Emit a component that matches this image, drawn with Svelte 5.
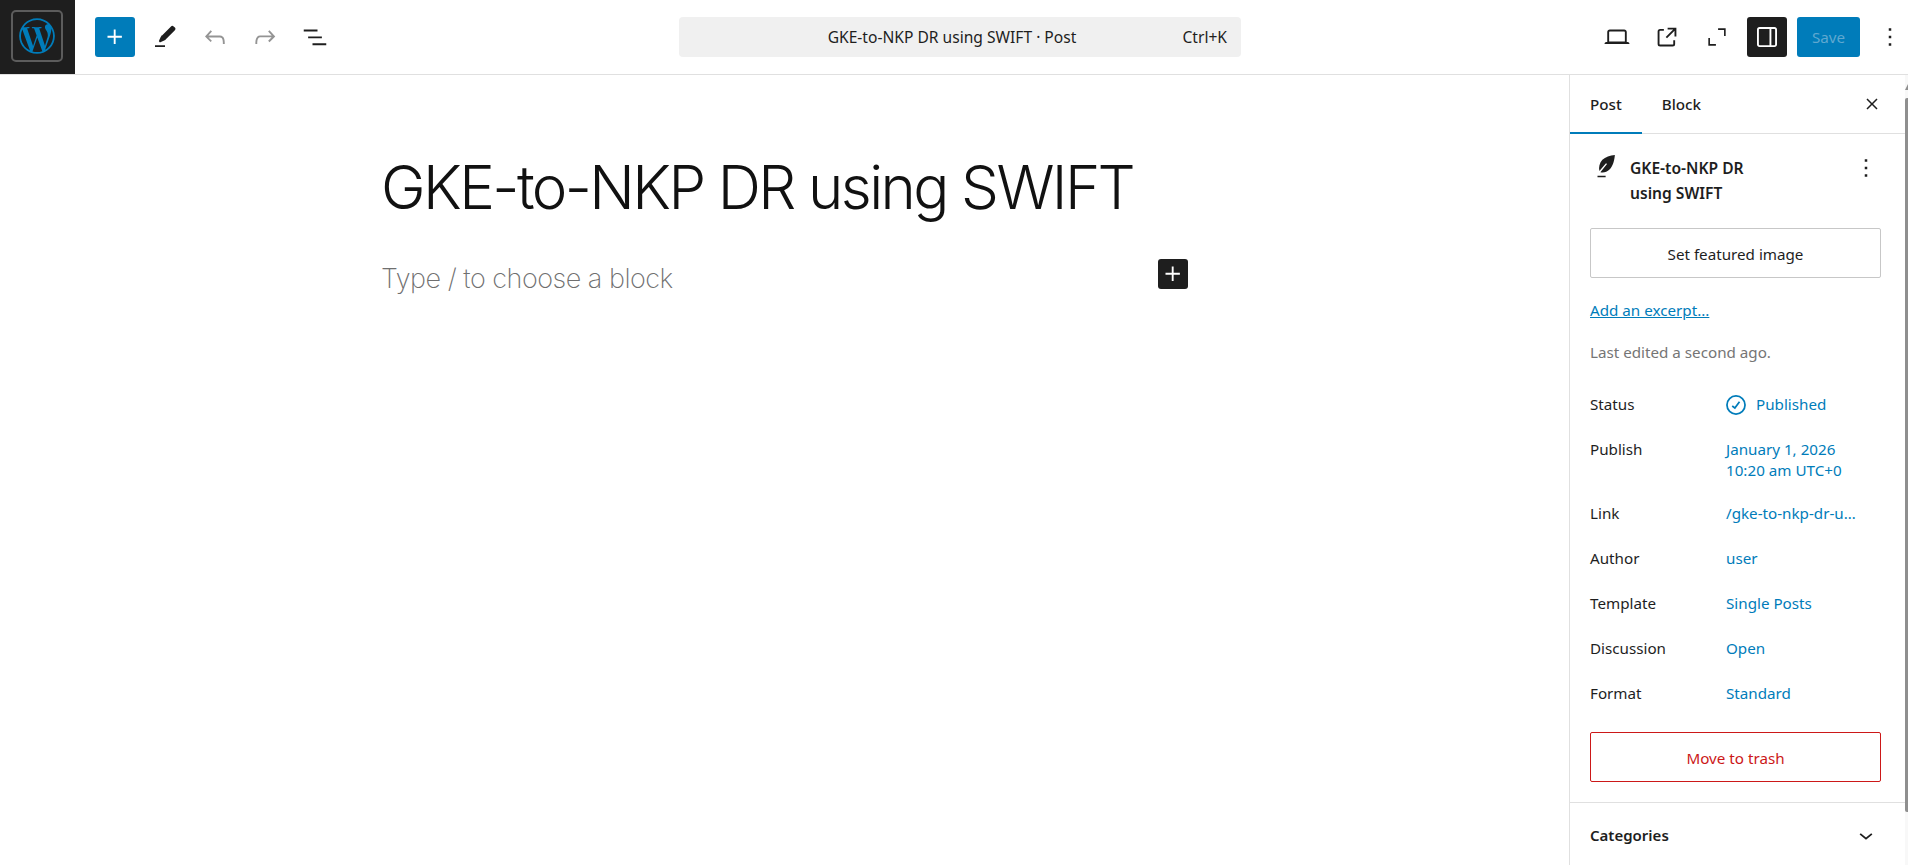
<script>
  const rows = [
    { label: 'Link', value: '/gke-to-nkp-dr-u…' },
    { label: 'Author', value: 'user' },
    { label: 'Template', value: 'Single Posts' },
    { label: 'Discussion', value: 'Open' },
    { label: 'Format', value: 'Standard' }
  ];
</script>

<div class="editor">
  <header class="topbar">
    <div class="left">
      <a class="logo" href="#top" aria-label="View Posts">
        <span class="logo-frame">
          <svg width="38" height="38" viewBox="0 0 80 80">
            <path fill="#007cba" d="M40 2.4C19.3 2.4 2.4 19.3 2.4 40S19.3 77.6 40 77.6 77.6 60.7 77.6 40 60.7 2.4 40 2.4zM6.2 40c0-4.9 1-9.5 2.9-13.8l16.1 44.1C14 64.9 6.2 53.4 6.2 40zM40 73.8c-3.3 0-6.5-.5-9.5-1.4l10.1-29.4 10.4 28.4c.1.2.2.3.2.5-3.5 1.2-7.2 1.9-11.2 1.9zm4.7-49.6c2-.1 3.9-.3 3.9-.3 1.8-.2 1.6-2.9-.2-2.8 0 0-5.5.4-9 .4-3.3 0-8.9-.4-8.9-.4-1.8-.1-2.1 2.7-.2 2.8 0 0 1.7.2 3.6.3l5.3 14.6-7.5 22.4-12.4-37c2-.1 3.9-.3 3.9-.3 1.8-.2 1.6-2.9-.2-2.8 0 0-5.5.4-9 .4h-2.2C17.8 12.2 28.2 6.2 40 6.2c8.8 0 16.8 3.4 22.8 8.9h-.4c-3.3 0-5.7 2.9-5.7 6 0 2.8 1.6 5.1 3.3 7.9 1.3 2.3 2.8 5.1 2.8 9.3 0 2.9-1.1 6.2-2.6 10.9l-3.4 11.3-12.1-36.3zM57 69.2l10.3-29.7c1.9-4.8 2.6-8.6 2.6-12 0-1.2-.1-2.4-.2-3.4 2.6 4.8 4.1 10.2 4.1 15.9 0 12.5-6.8 23.4-16.8 29.2z"/>
          </svg>
        </span>
      </a>
      <div class="tools">
        <button class="icon-btn primary" aria-label="Add block">
          <svg viewBox="0 0 24 24"><path fill="#fff" d="M11 12.5V17.5H12.5V12.5H17.5V11H12.5V6H11V11H6V12.5H11Z"/></svg>
        </button>
        <button class="icon-btn" aria-label="Tools">
          <svg viewBox="0 0 24 24"><path fill="#1e1e1e" d="M4 20h8v-1.5H4V20zM18.9 3.5c-.6-.6-1.500-.6-2.100 0l-7.200 7.200c-.4-.4-2.500 4.700-2.500 4.700l.9.9s5.100-2.100 4.700-2.500l7.200-7.200c.6-.7.6-1.600 0-2.200z"/></svg>
        </button>
        <button class="icon-btn" aria-label="Undo">
          <svg viewBox="0 0 24 24"><path fill="#949494" d="M18.3 11.7c-.6-.6-1.400-.9-2.300-.9H6.700l2.900-3.300-1.100-1-4.500 5L8.500 16l1-1-2.700-2.700H16c.5 0 .9.2 1.300.5 1 1 1 3.400 1 4.500v.3h1.500v-.2c0-1.500 0-4.300-1.500-5.700z"/></svg>
        </button>
        <button class="icon-btn" aria-label="Redo">
          <svg viewBox="0 0 24 24"><path fill="#949494" d="M15.6 6.500l-1.100 1 2.900 3.300H8c-.9 0-1.700.3-2.300.9-1.400 1.500-1.400 4.200-1.400 5.600v.2h1.500v-.3c0-1.100 0-3.500 1-4.500.3-.3.7-.5 1.300-.5h9.200L14.500 15l1.100 1.100 4.600-4.600-4.600-5z"/></svg>
        </button>
        <button class="icon-btn" aria-label="Document overview">
          <svg viewBox="0 0 24 24"><path fill="#1e1e1e" d="M3 6h11v1.500H3V6Zm3.500 5.500h11V13h-11v-1.500ZM21 17H10v1.500h11V17Z"/></svg>
        </button>
      </div>
    </div>

    <div class="command">
      <span class="command-title">GKE-to-NKP DR using SWIFT · Post</span>
      <span class="shortcut">Ctrl+K</span>
    </div>

    <div class="right">
      <button class="icon-btn" aria-label="View">
        <svg viewBox="0 0 24 24"><path fill="#1e1e1e" d="M20.500 16h-.7V8c0-1.100-.9-2-2-2H6.200c-1.100 0-2 .9-2 2v8h-.7c-.8 0-1.500.7-1.500 1.500h20c0-.8-.7-1.500-1.500-1.500zM5.700 8c0-.3.2-.5.5-.5h11.600c.3 0 .5.2.5.5v7.600H5.700V8z"/></svg>
      </button>
      <button class="icon-btn" aria-label="View post">
        <svg viewBox="0 0 24 24"><path fill="#1e1e1e" d="M19.500 4.500h-7V6h4.440l-5.970 5.970 1.060 1.060L18 7.060v4.440h1.500v-7Zm-13 1a2 2 0 0 0-2 2v10a2 2 0 0 0 2 2h10a2 2 0 0 0 2-2v-3H17v3a.5.5 0 0 1-.5.5h-10a.5.5 0 0 1-.5-.5v-10a.5.5 0 0 1 .5-.5h3V5.500h-3Z"/></svg>
      </button>
      <button class="icon-btn full" aria-label="Fullscreen">
        <svg viewBox="0 0 24 24"><path fill="#1e1e1e" d="M13 5.500h5.500V11H20V4h-7v1.500zM5.500 13H4v7h7v-1.500H5.500V13z"/></svg>
      </button>
      <button class="icon-btn dark" aria-label="Settings">
        <svg viewBox="0 0 24 24"><path fill="#fff" d="M18 4H6c-1.100 0-2 .9-2 2v12c0 1.100.9 2 2 2h12c1.100 0 2-.9 2-2V6c0-1.100-.9-2-2-2zM5.500 18V6c0-.3.2-.5.5-.5h8v13H6c-.3 0-.5-.2-.5-.5zm13 0c0 .3-.2.5-.5.5h-2.500v-13H18c.3 0 .5.2.5.5v12z"/></svg>
      </button>
      <button class="save">Save</button>
      <button class="icon-btn more" aria-label="Options">
        <svg viewBox="0 0 24 24"><path fill="#1e1e1e" d="M13 19h-2v-2h2v2zm0-6h-2v-2h2v2zm0-6h-2V5h2v2z"/></svg>
      </button>
    </div>
  </header>

  <div class="body">
    <main class="canvas">
      <div class="content">
        <h1>GKE-to-NKP DR using SWIFT</h1>
        <div class="placeholder-row">
          <p>Type / to choose a block</p>
          <button class="inline-add" aria-label="Add block">
            <svg width="30" height="30" viewBox="0 0 24 24"><path fill="#fff" d="M11 12.500V17.500H12.500V12.500H17.500V11H12.500V6H11V11H6V12.500H11Z"/></svg>
          </button>
        </div>
      </div>
    </main>

    <aside class="sidebar">
      <div class="tabs">
        <span class="tab active">Post</span>
        <span class="tab">Block</span>
        <button class="close" aria-label="Close">
          <svg width="24" height="24" viewBox="0 0 24 24"><path fill="#1e1e1e" d="m13.060 12 4.470-4.470-1.060-1.060L12 10.940 7.530 6.470 6.470 7.530 10.940 12l-4.470 4.470 1.060 1.060L12 13.060l4.470 4.470 1.060-1.060L13.060 12Z"/></svg>
        </button>
      </div>

      <section class="panel">
        <div class="post-card">
          <svg class="feather" width="30" height="30" viewBox="0 0 24 24"><path fill="#1e1e1e" d="M19.900 3.100c-3.900.2-7.600 1.500-10 3.900C7.600 9.300 6.800 13.200 7.500 16l5.300-6.300.8.700L8.300 17c2.600.6 5.300-.2 7.300-2.200 2.900-3 3.900-7.500 4.300-11.700zM6 19.700h6.500v1.300H6z"/></svg>
          <div class="post-title">GKE-to-NKP DR<br />using SWIFT</div>
          <svg class="dots" width="30" height="30" viewBox="0 0 24 24"><path fill="#1e1e1e" d="M13 19h-2v-2h2v2zm0-6h-2v-2h2v2zm0-6h-2V5h2v2z"/></svg>
        </div>

        <button class="wide-btn">Set featured image</button>
        <a class="excerpt" href="#top">Add an excerpt...</a>
        <p class="edited">Last edited a second ago.</p>

        <div class="row status">
          <span class="label">Status</span>
          <span class="value with-icon">
            <svg width="28" height="28" viewBox="0 0 24 24"><path fill="#007cba" d="M12 3.500a8.500 8.500 0 1 0 0 17 8.500 8.500 0 0 0 0-17ZM5 12a7 7 0 1 1 14 0 7 7 0 0 1-14 0Zm10.600-2.300-4.400 5.900-2.900-2.200.9-1.200 1.700 1.300 3.500-4.700 1.200.9Z"/></svg>
            Published
          </span>
        </div>
        <div class="row publish">
          <span class="label">Publish</span>
          <span class="value">January 1, 2026<br />10:20 am UTC+0</span>
        </div>
        {#each rows as row}
          <div class="row">
            <span class="label">{row.label}</span>
            <span class="value">{row.value}</span>
          </div>
        {/each}

        <button class="wide-btn danger">Move to trash</button>
      </section>

      <section class="collapsed">
        <span>Categories</span>
        <svg width="28" height="28" viewBox="0 0 24 24"><path fill="#1e1e1e" d="M17.500 11.600 12 16.100l-5.500-4.500 1-1.200 4.500 3.700 4.500-3.700 1 1.200z"/></svg>
      </section>
      <div class="scrollbar"><div class="arrow"></div><div class="thumb"></div></div>
    </aside>
  </div>
</div>

<style>
  :global(body) {
    margin: 0;
    background: #fff;
    overflow: hidden;
  }

  .editor {
    width: 1908px;
    height: 865px;
    overflow: hidden;
    display: flex;
    flex-direction: column;
    font-family: "Noto Sans", "Open Sans", sans-serif;
    font-size: 15.200px;
    color: #1e1e1e;
  }

  button {
    font: inherit;
    border: 0;
    background: none;
    padding: 0;
    cursor: pointer;
  }

  .topbar {
    height: 74px;
    flex: none;
    border-bottom: 1px solid #e0e0e0;
    display: grid;
    grid-template-columns: 679px 562px 1fr;
    align-items: center;
  }

  .left {
    display: flex;
    align-items: center;
    height: 74px;
  }

  .logo {
    width: 75px;
    height: 74px;
    background: #1e1e1e;
    display: flex;
    align-items: center;
    justify-content: center;
  }

  .logo-frame {
    width: 48px;
    height: 48px;
    border: 2px solid #5c5c5c;
    border-radius: 5px;
    display: flex;
    align-items: center;
    justify-content: center;
    margin: 0 2px 2px 0;
  }

  .tools {
    display: flex;
    align-items: center;
    gap: 10px;
    margin-left: 20px;
  }

  .icon-btn {
    width: 40px;
    height: 40px;
    border-radius: 3px;
    display: flex;
    align-items: center;
    justify-content: center;
  }

  .icon-btn svg {
    width: 30px;
    height: 30px;
    flex: none;
  }

  .icon-btn.full svg {
    width: 26px;
    height: 26px;
  }

  .icon-btn.primary {
    background: #007cba;
  }

  .icon-btn.dark {
    background: #1e1e1e;
  }

  .command {
    height: 40px;
    background: #f0f0f0;
    border-radius: 4px;
    display: flex;
    align-items: center;
    justify-content: center;
    position: relative;
    font-size: 15.600px;
    box-sizing: border-box;
    padding-right: 16px;
  }

  .shortcut {
    position: absolute;
    right: 14px;
    top: 9px;
  }

  .right {
    display: flex;
    align-items: center;
    justify-content: flex-end;
    gap: 10px;
  }

  .right .icon-btn.more {
    width: 24px;
    margin-left: 8px;
    margin-right: 6px;
  }

  .save {
    width: 63px;
    height: 40px;
    border-radius: 3px;
    background: #007cba;
    color: #5fa8d0;
  }

  .body {
    flex: 1;
    display: flex;
    min-height: 0;
  }

  .canvas {
    flex: 1;
    min-width: 0;
  }

  .content {
    width: 807px;
    margin-left: 381px;
    padding-top: 77px;
    font-family: Inter, sans-serif;
  }

  h1 {
    margin: 0;
    font-size: 60px;
    line-height: 70px;
    font-weight: 300;
    letter-spacing: -2.600px;
    color: #111;
  }

  .placeholder-row {
    display: flex;
    align-items: center;
    justify-content: space-between;
    margin-top: 36px;
    height: 40px;
  }

  .placeholder-row p {
    margin: 0;
    font-size: 27px;
    font-weight: 200;
    letter-spacing: -0.500px;
    color: #6f6f6f;
  }

  .inline-add {
    width: 30px;
    height: 30px;
    background: #1e1e1e;
    border-radius: 3px;
    display: flex;
    align-items: center;
    justify-content: center;
    margin-bottom: 9px;
  }

  .sidebar {
    width: 339px;
    flex: none;
    border-left: 1px solid #e0e0e0;
    box-sizing: border-box;
    padding-right: 3px;
    position: relative;
  }

  .tabs {
    height: 58px;
    border-bottom: 1px solid #e0e0e0;
    display: flex;
    align-items: center;
    position: relative;
  }

  .tab {
    padding: 0 20px;
    height: 58px;
    line-height: 58px;
    box-sizing: border-box;
    font-weight: 500;
  }

  .tab.active {
    box-shadow: inset 0 -2px 0 #007cba;
    margin-bottom: -1px;
    height: 59px;
  }

  .close {
    position: absolute;
    right: 21px;
    top: 17px;
    width: 24px;
    height: 24px;
  }

  .panel {
    padding: 0 20px;
    border-bottom: 1px solid #e0e0e0;
    padding-bottom: 20px;
  }

  .post-card {
    display: flex;
    align-items: flex-start;
    height: 94px;
    padding-top: 20px;
    box-sizing: border-box;
  }

  .feather {
    flex: none;
    margin-top: -3px;
    margin-right: 10px;
  }

  .post-title {
    flex: 1;
    line-height: 25px;
    font-weight: 600;
    font-size: 15.600px;
    margin-top: 2px;
  }

  .dots {
    flex: none;
    margin-right: 4px;
    margin-top: -1px;
  }

  .wide-btn {
    display: block;
    width: 291px;
    height: 50px;
    padding-top: 2px;
    border: 1px solid #c7c7c7;
    border-radius: 2px;
    background: #fff;
    color: #1e1e1e;
  }

  .excerpt {
    display: block;
    margin-top: 21px;
    line-height: 22px;
    color: #007cba;
  }

  .edited {
    margin: 20px 0 0;
    line-height: 22px;
    color: #757575;
  }

  .row {
    display: flex;
    min-height: 45px;
    align-items: flex-start;
    line-height: 21px;
  }

  .row.status {
    margin-top: 31px;
  }

  .row.publish {
    min-height: 64px;
  }

  .label {
    width: 136px;
    flex: none;
  }

  .value {
    color: #007cba;
  }

  .with-icon {
    display: flex;
    align-items: center;
    gap: 6px;
    height: 21px;
  }

  .with-icon svg {
    margin-left: -4px;
  }

  .row:last-of-type {
    min-height: 0;
  }

  .wide-btn.danger {
    margin-top: 28px;
    border-color: #cc1818;
    color: #cc1818;
  }

  .collapsed {
    height: 63px;
    padding: 0 20px;
    display: flex;
    align-items: center;
    justify-content: space-between;
    font-weight: 600;
    font-size: 15px;
  }

  .collapsed svg {
    margin-right: 5px;
  }

  .scrollbar {
    position: absolute;
    right: 0;
    top: 0;
    bottom: 0;
    width: 3px;
    background: #f8f8f8;
  }

  .arrow {
    position: absolute;
    right: 0;
    top: 9px;
    border-left: 3px solid transparent;
    border-bottom: 6px solid #8f8f8f;
  }

  .thumb {
    position: absolute;
    left: 0;
    top: 23px;
    width: 3px;
    height: 714px;
    background: #8f8f8f;
    border-radius: 2px 0 0 2px;
  }
</style>
